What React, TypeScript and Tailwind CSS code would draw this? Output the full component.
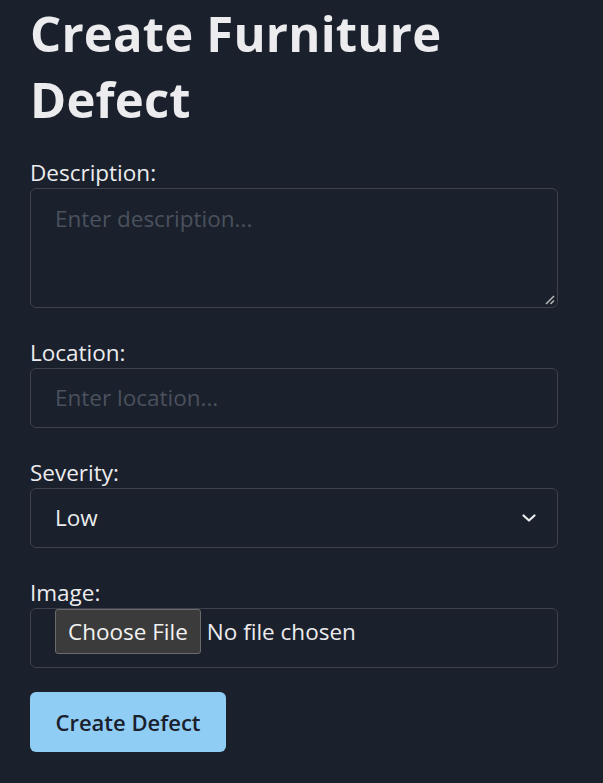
import React from 'react';

const font = { fontFamily: '"Open Sans", "Noto Sans", sans-serif' };

const Label: React.FC<{ text: string }> = ({ text }) => (
  <label className="block h-[30px] text-[22.5px] leading-[30px] text-[#ececee]">{text}</label>
);

export default function App() {
  return (
    <div className="min-h-[783px] bg-[#1a202c] px-[30px]" style={font}>
      <h1 className="text-[49px] font-bold leading-[66px] tracking-[0.2px] text-[#ececee]">
        Create Furniture
        <br />
        Defect
      </h1>

      <form className="mt-[26px] flex w-[528px] flex-col">
        <Label text="Description:" />
        <div className="relative h-[120px] rounded-[6px] border border-[#3d424d] px-6 pt-[13px] text-[22.5px] text-[#4b515d]">
          Enter description...
          <svg className="absolute bottom-[2px] right-[2px]" width="10" height="10" viewBox="0 0 10 10">
            <path d="M9 1 L1 9" stroke="#b5b5b5" strokeWidth="1.6" />
            <path d="M9 5.5 L5.5 9" stroke="#b5b5b5" strokeWidth="1.6" />
          </svg>
        </div>

        <div className="mt-[30px]">
          <Label text="Location:" />
          <div className="flex h-[60px] items-center rounded-[6px] border border-[#3d424d] px-6 text-[22.5px] text-[#4b515d]">
            Enter location...
          </div>
        </div>

        <div className="mt-[30px]">
          <Label text="Severity:" />
          <div className="flex h-[60px] items-center justify-between rounded-[6px] border border-[#3d424d] pl-6 pr-[20px] text-[22.5px] text-[#ececee]">
            <span>Low</span>
            <svg width="16" height="16" viewBox="0 0 16 16" fill="none">
              <path d="M2.5 5.5 L8 10.5 L13.5 5.5" stroke="#ececee" strokeWidth="2.2" strokeLinecap="round" strokeLinejoin="round" />
            </svg>
          </div>
        </div>

        <div className="mt-[30px]">
          <Label text="Image:" />
          <div className="flex h-[60px] items-start rounded-[6px] border border-[#3d424d] pl-6 text-[22.5px] text-[#ececee]">
            <span className="flex h-[45px] items-center rounded-[3px] border border-[#6b6b6b] bg-[#3b3b3b] px-3 text-[#f2f2f2]">
              Choose File
            </span>
            <span className="ml-[6px] flex h-[45px] items-center">No file chosen</span>
          </div>
        </div>

        <button
          type="button"
          className="mt-[24px] h-[60px] w-[196px] rounded-[6px] bg-[#90cdf4] text-[22px] font-semibold text-[#1a202c]"
        >
          Create Defect
        </button>
      </form>
    </div>
  );
}
